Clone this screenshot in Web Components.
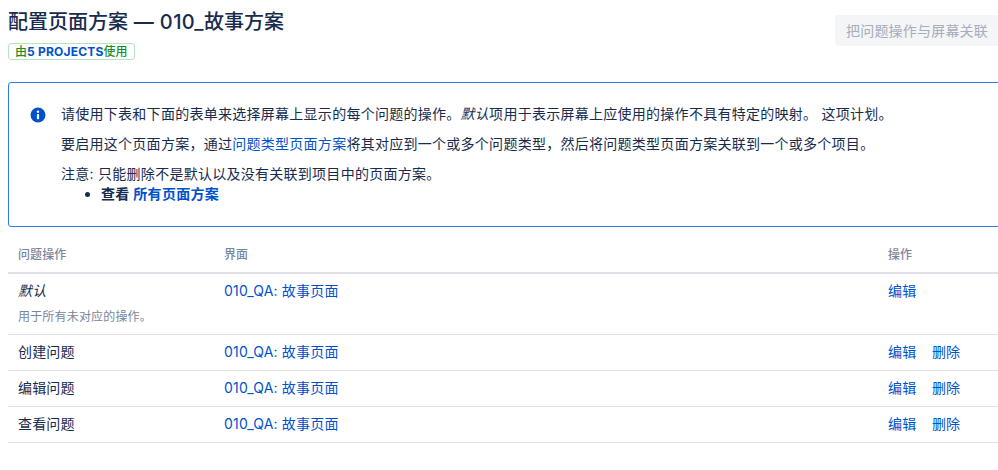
<!DOCTYPE html>
<html lang="zh">
<head>
<meta charset="utf-8">
<title>配置页面方案</title>
<style>
  html, body { margin: 0; overflow: hidden; background: #fff; }
  body {
    font-family: Inter, "Noto Sans CJK SC", sans-serif;
    font-size: 14px;
    line-height: 20px;
    color: #172b4d;
  }
  info-panel a { color: #0052cc; text-decoration: none; }
  info-panel strong { font-weight: 600; }
</style>
</head>
<body>
<scheme-page>
  <page-header slot="header" action="把问题操作与屏幕关联">
    <span slot="title">配置页面方案<i> — 010_</i>故事方案</span>
    <scheme-lozenge>由<b>5 PROJECTS</b>使用</scheme-lozenge>
  </page-header>
  <info-panel slot="info">
    <p>请使用下表和下面的表单来选择屏幕上显示的每个问题的操作。<em>默认</em>项用于表示屏幕上应使用的操作不具有特定的映射。 这项计划。</p>
    <p>要启用这个页面方案，通过<a href="#">问题类型页面方案</a>将其对应到一个或多个问题类型，然后将问题类型页面方案关联到一个或多个项目。</p>
    <p>注意: 只能删除不是默认以及没有关联到项目中的页面方案。</p>
    <ul><li><strong>查看 <a href="#">所有页面方案</a></strong></li></ul>
  </info-panel>
  <scheme-table slot="table">
    <scheme-row screen="010_QA: 故事页面" tall><em>默认</em><small slot="note">用于所有未对应的操作。</small></scheme-row>
    <scheme-row screen="010_QA: 故事页面" removable>创建问题</scheme-row>
    <scheme-row screen="010_QA: 故事页面" removable>编辑问题</scheme-row>
    <scheme-row screen="010_QA: 故事页面" removable>查看问题</scheme-row>
  </scheme-table>
</scheme-page>

<script>
class SchemePage extends HTMLElement {
  constructor () {
    super()
    this.attachShadow({ mode: 'open' })
    this.shadowRoot.innerHTML = /* html */`
    <style>
      :host { display: block; width: 1010px; padding: 0 0 0 8px; box-sizing: border-box; }
      .stack { display: flex; flex-direction: column; }
    </style>
    <div class="stack">
      <slot name="header"></slot>
      <slot name="info"></slot>
      <slot name="table"></slot>
    </div>`
  }
}

class PageHeader extends HTMLElement {
  constructor () {
    super()
    this.attachShadow({ mode: 'open' })
  }

  connectedCallback () {
    this.shadowRoot.innerHTML = /* html */`
    <style>
      :host { display: flex; justify-content: space-between; height: 82px; }
      h1 { margin: 8px 0 7px; font-size: 20px; line-height: 28px; font-weight: 500; color: #172b4d; }
      ::slotted(span) { display: block; }
      button {
        margin-top: 15px;
        width: 175px;
        height: 31px;
        padding: 0 0 0 11px;
        border: 0;
        border-radius: 3px;
        background: #f4f5f7;
        color: #a5adba;
        font: inherit;
        letter-spacing: .2px;
        text-align: left;
      }
    </style>
    <div>
      <h1><slot name="title"></slot></h1>
      <slot></slot>
    </div>
    <button disabled>${this.getAttribute('action')}</button>`
  }
}

class SchemeLozenge extends HTMLElement {
  constructor () {
    super()
    this.attachShadow({ mode: 'open' })
    this.shadowRoot.innerHTML = /* html */`
    <style>
      :host {
        display: block;
        width: fit-content;
        height: 15px;
        padding: 0 6px;
        border: 1px solid #b5e3bd;
        border-radius: 3px;
        font-size: 12px;
        line-height: 15px;
        font-weight: 500;
        color: #1f8b2c;
      }
      ::slotted(b) { color: #0052cc; font-weight: 700; letter-spacing: .2px; }
    </style>
    <slot></slot>`
  }
}

class InfoPanel extends HTMLElement {
  constructor () {
    super()
    this.attachShadow({ mode: 'open' })
    this.shadowRoot.innerHTML = /* html */`
    <style>
      :host {
        display: flex;
        gap: 15px;
        height: 145px;
        box-sizing: border-box;
        padding: 21px 20px 0 21px;
        border: 1px solid #2b7de9;
        border-radius: 3px;
      }
      svg { flex: none; width: 16px; height: 16px; margin-top: 3px; }
      .body { font-size: 14px; line-height: 20px; letter-spacing: .27px; }
      ::slotted(p) { margin: 0 0 10px; }
      ::slotted(ul) { margin: -10px 0 0; padding-left: 40px; }
    </style>
    <svg viewBox="0 0 16 16" aria-hidden="true">
      <circle cx="8" cy="8" r="7.5" fill="#0052cc"/>
      <circle cx="8" cy="4.8" r="1.2" fill="#fff"/>
      <rect x="6.9" y="7" width="2.2" height="5.2" rx=".7" fill="#fff"/>
    </svg>
    <div class="body"><slot></slot></div>`
  }
}

class SchemeTable extends HTMLElement {
  constructor () {
    super()
    this.attachShadow({ mode: 'open' })
    this.shadowRoot.innerHTML = /* html */`
    <style>
      :host { display: block; margin-top: 17px; }
      .head {
        display: grid;
        grid-template-columns: 206px 664px 1fr;
        height: 27px;
        padding: 1px 0 0 10px;
        border-bottom: 2px solid #dfe1e6;
        font-size: 12px;
        line-height: 20px;
        font-weight: 500;
        letter-spacing: .1px;
        color: #7a869a;
      }
    </style>
    <div class="head"><span>问题操作</span><span>界面</span><span>操作</span></div>
    <slot></slot>`
  }
}

class SchemeRow extends HTMLElement {
  constructor () {
    super()
    this.attachShadow({ mode: 'open' })
  }

  connectedCallback () {
    const removable = this.hasAttribute('removable')
    this.shadowRoot.innerHTML = /* html */`
    <style>
      :host {
        display: grid;
        grid-template-columns: 206px 664px 1fr;
        padding: 7px 0 8px 10px;
        border-bottom: 1px solid #dfe1e6;
        min-height: 20px;
        letter-spacing: .18px;
      }
      :host([tall]) { height: 45px; }
      a { color: #0052cc; text-decoration: none; }
      .ops { display: flex; gap: 15.5px; }
      ::slotted(em) { display: block; }
      ::slotted(small) { display: block; margin-top: 8px; font-size: 12px; line-height: 16px; color: #7a869a; }
    </style>
    <div><slot></slot><slot name="note"></slot></div>
    <div><a href="#">${this.getAttribute('screen')}</a></div>
    <div class="ops"><a href="#">编辑</a>${removable ? '<a href="#">删除</a>' : ''}</div>`
  }
}

customElements.define('scheme-page', SchemePage)
customElements.define('page-header', PageHeader)
customElements.define('scheme-lozenge', SchemeLozenge)
customElements.define('info-panel', InfoPanel)
customElements.define('scheme-table', SchemeTable)
customElements.define('scheme-row', SchemeRow)
</script>
<style>
  page-header i { font-style: normal; letter-spacing: .4px; }
</style>
</body>
</html>
